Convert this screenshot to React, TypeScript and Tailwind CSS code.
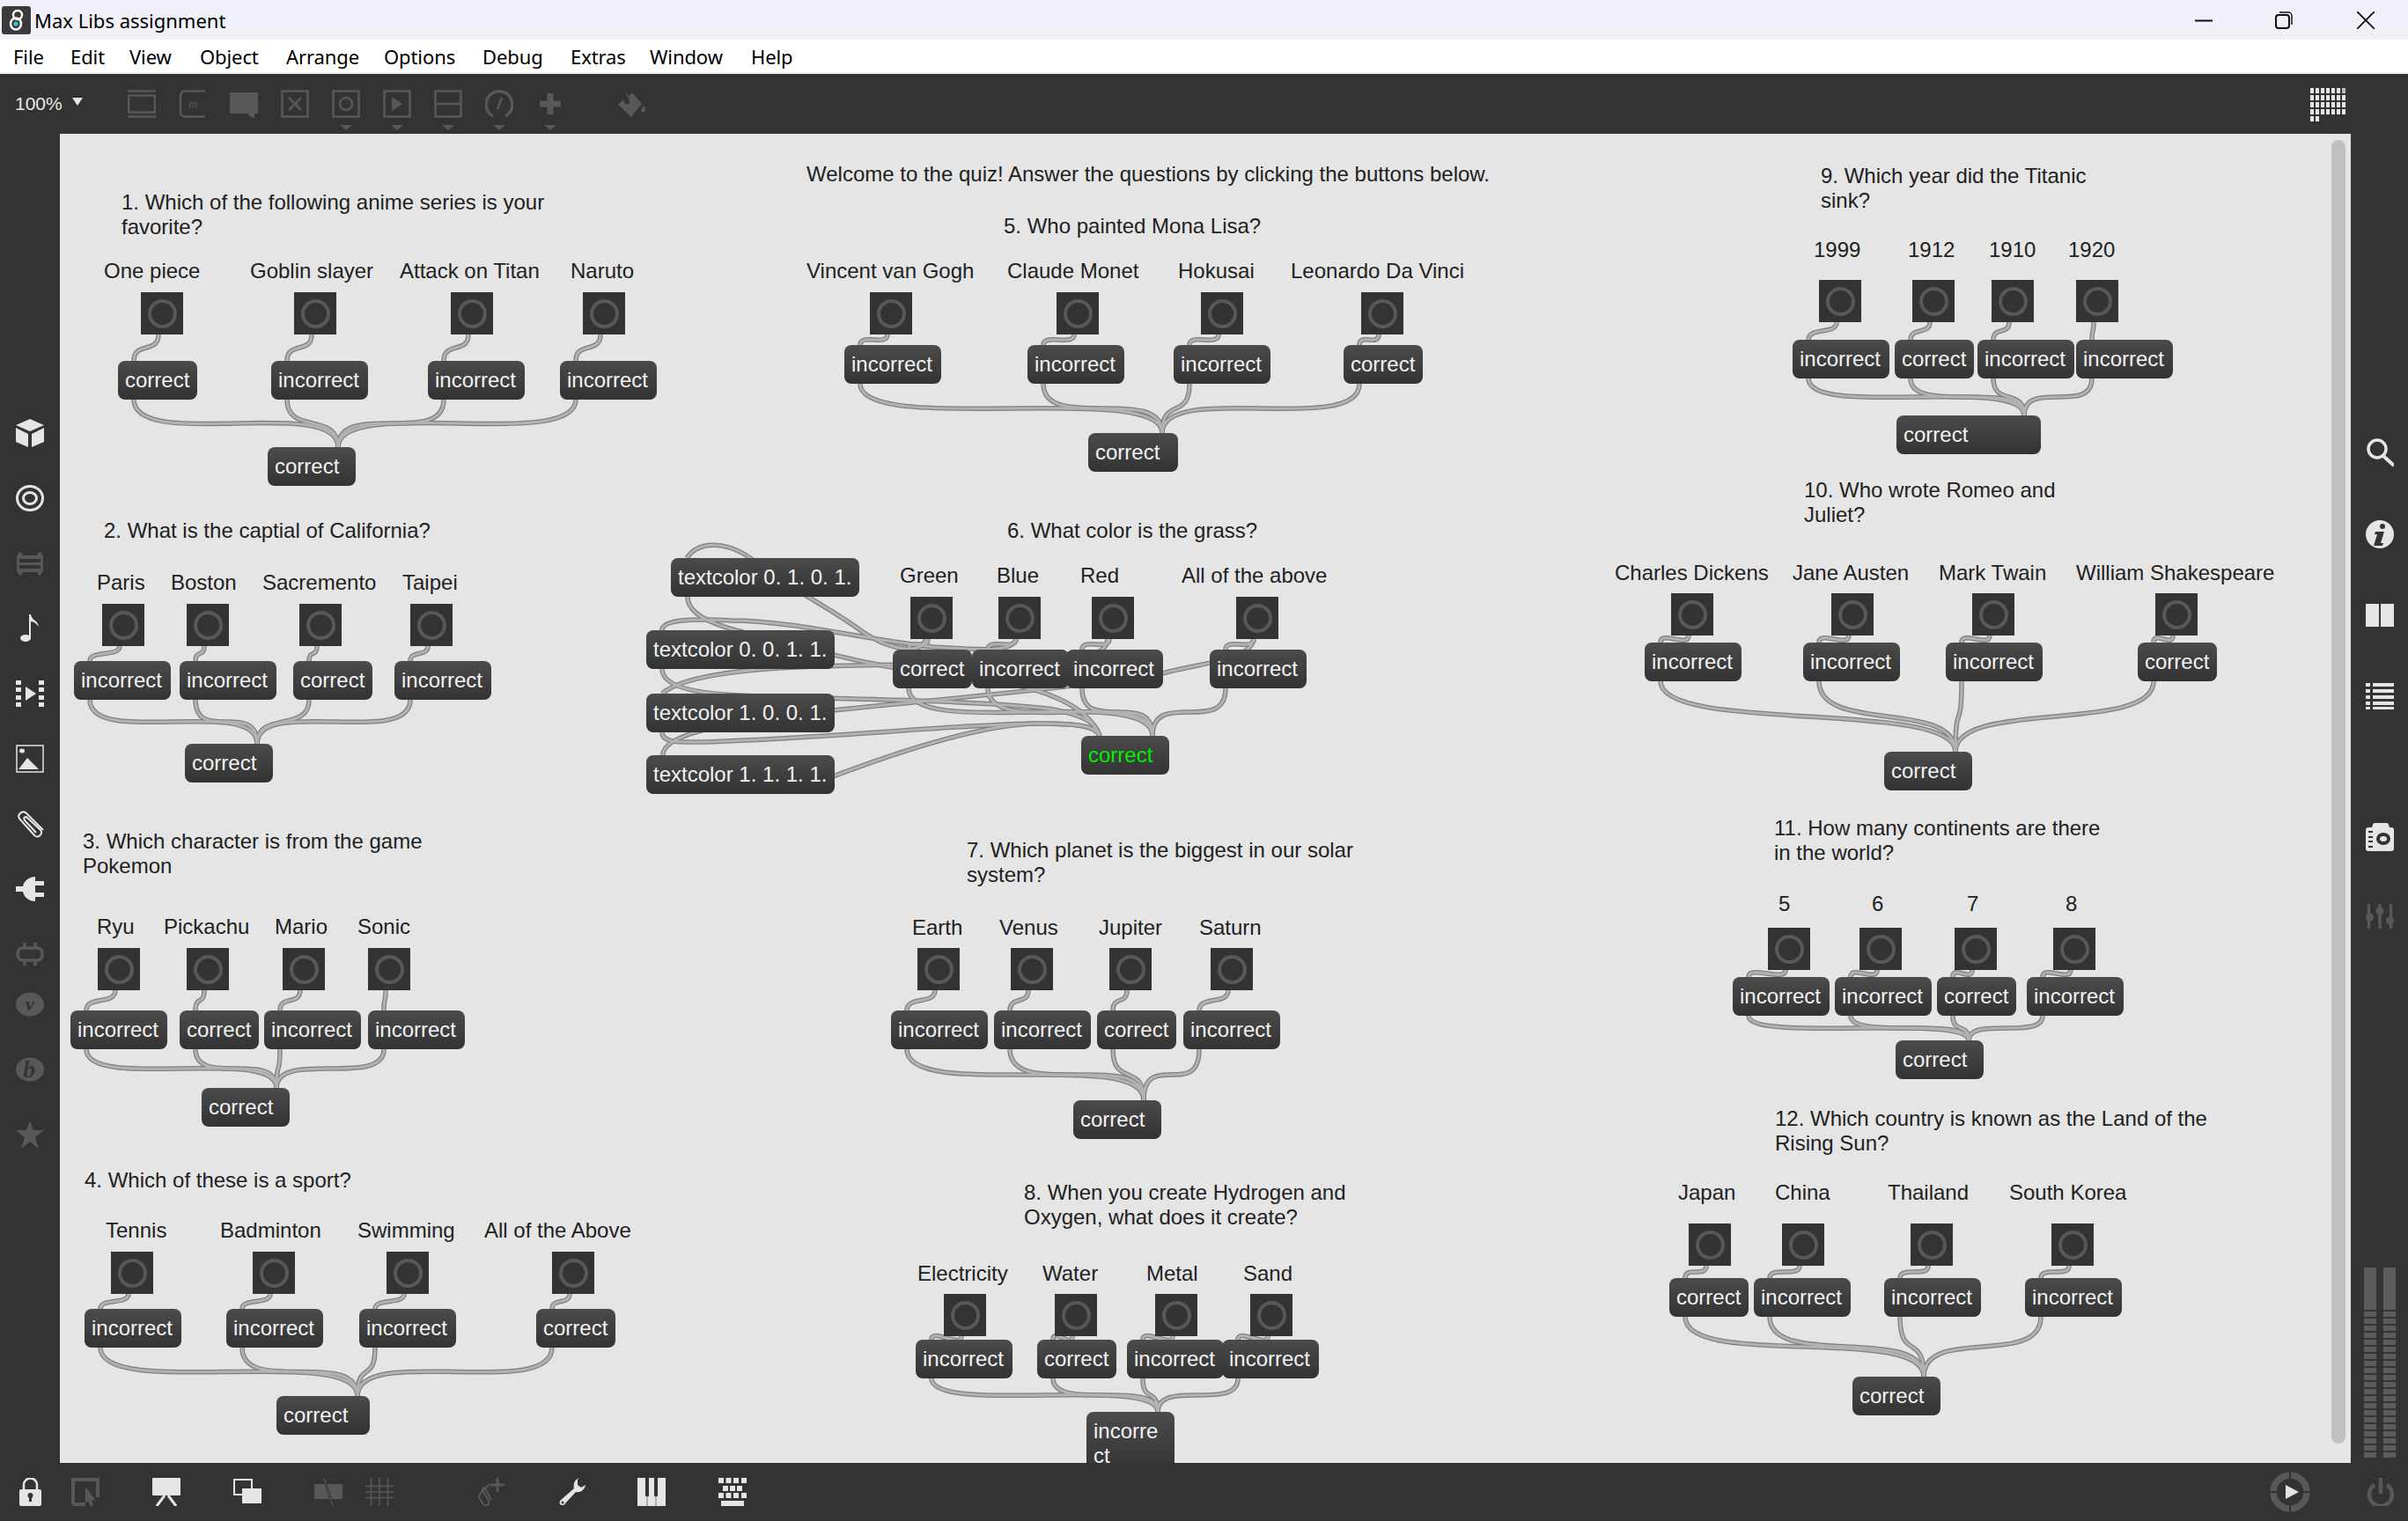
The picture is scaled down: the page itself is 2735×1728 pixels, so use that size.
import React from "react";

const DIM = "#585858";
const LT = "#e5e5e5";
const CX = 68;
const CY = 152;

type Q = {
  text: [number, number, string];
  ly: number;
  labels: [number, string][];
  ty: number;
  toggles: number[];
  my: number;
  msgs: [number, string][];
  target: { x: number; y: number; w: number; inlet: number; text?: string; green?: boolean; h?: number };
};

const quiz: Q[] = [
  { text: [138, 229, "1. Which of the following anime series is your\nfavorite?"], ly: 307, labels: [[118, "One piece"], [284, "Goblin slayer"], [454, "Attack on Titan"], [648, "Naruto"]], ty: 332, toggles: [160, 334, 512, 662], my: 410, msgs: [[134, "correct"], [308, "incorrect"], [486, "incorrect"], [636, "incorrect"]], target: { x: 304, y: 508, w: 100, inlet: 384 } },
  { text: [118, 602, "2. What is the captial of California?"], ly: 661, labels: [[110, "Paris"], [194, "Boston"], [298, "Sacremento"], [457, "Taipei"]], ty: 686, toggles: [116, 212, 340, 466], my: 751, msgs: [[84, "incorrect"], [204, "incorrect"], [333, "correct"], [448, "incorrect"]], target: { x: 210, y: 845, w: 100, inlet: 292 } },
  { text: [94, 955, "3. Which character is from the game\nPokemon"], ly: 1052, labels: [[110, "Ryu"], [186, "Pickachu"], [312, "Mario"], [406, "Sonic"]], ty: 1077, toggles: [111, 212, 321, 418], my: 1148, msgs: [[80, "incorrect"], [204, "correct"], [300, "incorrect"], [418, "incorrect"]], target: { x: 229, y: 1236, w: 100, inlet: 314 } },
  { text: [96, 1340, "4. Which of these is a sport?"], ly: 1397, labels: [[120, "Tennis"], [250, "Badminton"], [406, "Swimming"], [550, "All of the Above"]], ty: 1422, toggles: [126, 287, 439, 627], my: 1487, msgs: [[96, "incorrect"], [257, "incorrect"], [408, "incorrect"], [609, "correct"]], target: { x: 314, y: 1586, w: 106, inlet: 406 } },
  { text: [1140, 256, "5. Who painted Mona Lisa?"], ly: 307, labels: [[916, "Vincent van Gogh"], [1144, "Claude Monet"], [1338, "Hokusai"], [1466, "Leonardo Da Vinci"]], ty: 332, toggles: [988, 1200, 1364, 1546], my: 392, msgs: [[959, "incorrect"], [1167, "incorrect"], [1333, "incorrect"], [1526, "correct"]], target: { x: 1236, y: 492, w: 102, inlet: 1320 } },
  { text: [1144, 602, "6. What color is the grass?"], ly: 653, labels: [[1022, "Green"], [1132, "Blue"], [1227, "Red"], [1342, "All of the above"]], ty: 678, toggles: [1034, 1134, 1240, 1404], my: 738, msgs: [[1014, "correct"], [1104, "incorrect"], [1211, "incorrect"], [1374, "incorrect"]], target: { x: 1228, y: 836, w: 100, inlet: 1309, green: true } },
  { text: [1098, 965, "7. Which planet is the biggest in our solar\nsystem?"], ly: 1053, labels: [[1036, "Earth"], [1135, "Venus"], [1248, "Jupiter"], [1362, "Saturn"]], ty: 1077, toggles: [1042, 1148, 1260, 1375], my: 1148, msgs: [[1012, "incorrect"], [1129, "incorrect"], [1246, "correct"], [1344, "incorrect"]], target: { x: 1219, y: 1250, w: 100, inlet: 1299 } },
  { text: [1163, 1354, "8. When you create Hydrogen and\nOxygen, what does it create?"], ly: 1446, labels: [[1042, "Electricity"], [1184, "Water"], [1302, "Metal"], [1412, "Sand"]], ty: 1470, toggles: [1072, 1198, 1312, 1420], my: 1522, msgs: [[1040, "incorrect"], [1178, "correct"], [1280, "incorrect"], [1388, "incorrect"]], target: { x: 1234, y: 1604, w: 100, inlet: 1315, text: "incorre\nct", h: 72 } },
  { text: [2068, 199, "9. Which year did the Titanic\nsink?"], ly: 283, labels: [[2060, "1999"], [2167, "1912"], [2259, "1910"], [2349, "1920"]], ty: 318, toggles: [2066, 2172, 2262, 2358], my: 386, msgs: [[2036, "incorrect"], [2152, "correct"], [2246, "incorrect"], [2358, "incorrect"]], target: { x: 2154, y: 472, w: 164, inlet: 2299 } },
  { text: [2049, 556, "10. Who wrote Romeo and\nJuliet?"], ly: 650, labels: [[1834, "Charles Dickens"], [2036, "Jane Austen"], [2202, "Mark Twain"], [2358, "William Shakespeare"]], ty: 674, toggles: [1898, 2080, 2240, 2448], my: 730, msgs: [[1868, "incorrect"], [2048, "incorrect"], [2210, "incorrect"], [2428, "correct"]], target: { x: 2140, y: 854, w: 100, inlet: 2221 } },
  { text: [2015, 940, "11. How many continents are there\nin the world?"], ly: 1026, labels: [[2020, "5"], [2126, "6"], [2234, "7"], [2346, "8"]], ty: 1054, toggles: [2008, 2112, 2220, 2332], my: 1110, msgs: [[1968, "incorrect"], [2084, "incorrect"], [2200, "correct"], [2302, "incorrect"]], target: { x: 2153, y: 1182, w: 100, inlet: 2236 } },
  { text: [2016, 1270, "12. Which country is known as the Land of the\nRising Sun?"], ly: 1354, labels: [[1906, "Japan"], [2016, "China"], [2144, "Thailand"], [2282, "South Korea"]], ty: 1390, toggles: [1918, 2024, 2170, 2330], my: 1452, msgs: [[1896, "correct"], [1992, "incorrect"], [2140, "incorrect"], [2300, "incorrect"]], target: { x: 2104, y: 1564, w: 100, inlet: 2185 } },
];

const textcolors: [number, number, string][] = [
  [762, 634, "textcolor 0. 1. 0. 1."],
  [734, 716, "textcolor 0. 0. 1. 1."],
  [734, 788, "textcolor 1. 0. 0. 1."],
  [734, 858, "textcolor 1. 1. 1. 1."],
];

const extraCords = [
  "M1052 726 C1045 745 1010 738 980 718 C950 695 900 670 860 640 C830 615 795 612 780 634",
  "M781 678 C781 700 815 712 860 722 C950 745 1000 760 1100 770 C1180 778 1235 800 1249 836",
  "M1154 726 C1150 742 1110 738 1060 735 C990 728 900 705 830 705 C780 702 752 705 752 716",
  "M752 760 C752 780 790 788 840 790 C960 795 1100 795 1190 805 C1230 812 1245 820 1249 836",
  "M1258 726 C1258 760 1150 750 1050 755 C950 756 790 755 752 788",
  "M752 832 C752 845 775 843 800 843 C950 838 1100 822 1180 822 C1225 822 1245 825 1249 836",
  "M1424 726 C1420 750 1370 752 1320 765 C1200 785 1000 800 900 812 C820 822 752 835 753 858",
  "M900 900 C1000 860 1110 822 1180 822 C1225 822 1245 825 1249 836",
];

function cordPath(x1: number, y1: number, x2: number, y2: number) {
  const dy = y2 - y1;
  const dx = Math.abs(x2 - x1);
  const d = dy < 15 ? 14 : dx > 150 ? Math.min(dy * 1.1, 60) : dx > 60 ? Math.min(dy, 58) : dy * 0.75;
  return `M${x1} ${y1} C${x1} ${y1 + d} ${x2} ${y2 - d} ${x2} ${y2}`;
}

const msgW = (t: string) => (t === "correct" ? 90 : 110);

function allCords() {
  const out: string[] = [...extraCords];
  quiz.forEach((q) => {
    q.msgs.forEach(([mx, t], i) => {
      const tx = q.toggles[i];
      out.push(cordPath(tx + 20, q.ty + 48, mx + 18, q.my));
      out.push(cordPath(mx + 18, q.my + 44, q.target.inlet, q.target.y));
    });
  });
  return out;
}

function Message({ x, y, w, h = 44, text, green, wrap }: { x: number; y: number; w: number; h?: number; text: string; green?: boolean; wrap?: boolean }) {
  return (
    <div
      className={`absolute rounded-[8px] bg-gradient-to-b from-[#4b4b4b] to-[#333333] pl-[8px] text-[24px] leading-[28px] whitespace-pre ${green ? "text-[#00f000]" : "text-[#f2f2f2]"} ${wrap ? "pt-[8px]" : "flex items-center"}`}
      style={{ left: x - CX, top: y - CY, width: w, height: h }}
    >
      {text}
    </div>
  );
}

function Toggle({ x, y }: { x: number; y: number }) {
  return (
    <div className="absolute flex h-[48px] w-[48px] items-center justify-center bg-[#333333]" style={{ left: x - CX, top: y - CY }}>
      <div className="h-[33px] w-[33px] rounded-full border-[4px] border-[#585858]" />
    </div>
  );
}

function Label({ x, y, text }: { x: number; y: number; text: string }) {
  return (
    <div className="absolute whitespace-pre text-[24px] leading-[28px] text-[#212121]" style={{ left: x - CX, top: y - CY - 13 }}>
      {text}
    </div>
  );
}

function Ico({ children, w = 32, h = 32, vb = "0 0 32 32" }: { children: React.ReactNode; w?: number; h?: number; vb?: string }) {
  return (
    <svg width={w} height={h} viewBox={vb} className="block shrink-0">
      {children}
    </svg>
  );
}

const Caret = ({ show }: { show: boolean }) =>
  show ? (
    <svg width="14" height="6" viewBox="0 0 14 6" className="absolute top-[58px] left-[22px]">
      <path d="M0 0h14L7 6z" fill={DIM} />
    </svg>
  ) : null;

function ToolSlot({ children, caret = false }: { children: React.ReactNode; caret?: boolean }) {
  return (
    <div className="relative flex h-[68px] w-[58px] items-start justify-center pt-[18px]">
      {children}
      <Caret show={caret} />
    </div>
  );
}

function TopToolbar() {
  const s = { fill: "none", stroke: DIM, strokeWidth: 2.5 };
  return (
    <div className="flex h-[68px] items-start bg-[#333333]">
      <div className="flex h-[68px] w-[132px] items-center pl-[17px] text-[21px] text-[#e8e8e8]">
        <span>100%</span>
        <svg width="12" height="9" viewBox="0 0 12 9" className="mb-[6px] ml-[11px]">
          <path d="M0 0h12L6 9z" fill={LT} />
        </svg>
      </div>
      <ToolSlot>
        <Ico>
          <path d="M0 1.5h32M0 6.5h32M0 25.5h32M0 30.5h32M1 6v20M31 6v20" {...s} />
        </Ico>
      </ToolSlot>
      <ToolSlot>
        <Ico>
          <path d="M30 1.5H7a5 5 0 0 0-5 5v19a5 5 0 0 0 5 5h23" {...s} />
          <text x="11" y="21" fontFamily="Liberation Serif" fontStyle="italic" fontSize="15" fill={DIM}>m</text>
        </Ico>
      </ToolSlot>
      <ToolSlot>
        <Ico>
          <path d="M0 3h32v24h-4v6l-9-6H0z" fill={DIM} />
        </Ico>
      </ToolSlot>
      <ToolSlot>
        <Ico>
          <rect x="1.5" y="1.5" width="29" height="29" {...s} />
          <path d="M9 9l14 14M23 9L9 23" {...s} />
        </Ico>
      </ToolSlot>
      <ToolSlot caret>
        <Ico>
          <rect x="1.5" y="1.5" width="29" height="29" {...s} />
          <circle cx="16" cy="16" r="7" {...s} />
        </Ico>
      </ToolSlot>
      <ToolSlot caret>
        <Ico>
          <rect x="1.5" y="1.5" width="29" height="29" {...s} />
          <path d="M10 8l12 8-12 8z" fill={DIM} />
        </Ico>
      </ToolSlot>
      <ToolSlot caret>
        <Ico>
          <rect x="1.5" y="1.5" width="29" height="29" {...s} />
          <path d="M2 16h28" {...s} />
        </Ico>
      </ToolSlot>
      <ToolSlot caret>
        <Ico>
          <path d="M9 30A15 15 0 1 1 23 30" fill="none" stroke={DIM} strokeWidth="3.5" />
          <path d="M14 22L19 9" stroke={DIM} strokeWidth="2.5" />
        </Ico>
      </ToolSlot>
      <ToolSlot caret>
        <Ico>
          <path d="M16 4v24M4 16h24" fill="none" stroke={DIM} strokeWidth="7" />
        </Ico>
      </ToolSlot>
      <div className="ml-[48px] pt-[18px]">
        <Ico>
          <path d="M9 0l3 8-2 1z" fill={DIM} />
          <path d="M16 3l11 13-12 15L0 17l6-6 2 5h5L12 8z" fill={DIM} />
          <path d="M29 17c2 4 3 6 1 8s-5 0-4-2 2-3 3-6z" fill={DIM} />
        </Ico>
      </div>
      <div className="ml-auto mr-[71px] mt-[16px] grid grid-cols-[repeat(7,4.5px)] gap-x-[1.5px] gap-y-[2px]">
        {Array.from({ length: 30 }).map((_, i) => (
          <div key={i} className={`h-[6px] w-[4.5px] ${i === 6 ? "bg-[#bdbdbd]" : "bg-[#e6e6e6]"}`} />
        ))}
      </div>
    </div>
  );
}

function LeftBar() {
  return (
    <div className="flex w-[68px] shrink-0 flex-col items-center bg-[#333333] pt-[303px]">
      {[
        <Ico key="cube">
          <path d="M16 0l16 7-16 7L0 7z M0 10l14 7v15L0 26z M32 10l-14 7v15l14-6z" fill={LT} />
        </Ico>,
        <Ico key="target">
          <ellipse cx="16" cy="16" rx="14.5" ry="13.5" fill="none" stroke={LT} strokeWidth="3" />
          <ellipse cx="16" cy="16" rx="7.5" ry="6.5" fill="none" stroke={LT} strokeWidth="3" />
        </Ico>,
        <Ico key="rack">
          <rect x="1" y="7" width="30" height="19" fill={DIM} />
          <rect x="4" y="11" width="24" height="4" fill="#333333" />
          <rect x="4" y="18" width="24" height="4" fill="#333333" />
          <circle cx="5" cy="6" r="2.5" fill={DIM} />
          <circle cx="27" cy="6" r="2.5" fill={DIM} />
          <circle cx="27" cy="27" r="2.5" fill={DIM} />
          <circle cx="5" cy="27" r="2.5" fill={DIM} />
        </Ico>,
        <Ico key="note">
          <ellipse cx="11" cy="27" rx="6" ry="4" fill={LT} />
          <path d="M15 27V0h2c1 7 8 6 9 14-3-4-6-6-9-6v19z" fill={LT} />
        </Ico>,
        <Ico key="film">
          <path d="M0 1h6v5H0zM0 9h6v5H0zM0 18h6v5H0zM0 26h6v5H0zM26 1h6v5h-6zM26 9h6v5h-6zM26 18h6v5h-6zM26 26h6v5h-6zM11 8l12 8-12 8z" fill={LT} />
        </Ico>,
        <Ico key="img">
          <rect x="1" y="1" width="30" height="30" fill="none" stroke={LT} strokeWidth="1.5" />
          <ellipse cx="7" cy="7" rx="3" ry="2.5" fill={LT} />
          <path d="M3 28l10-13 13 13z" fill={LT} />
        </Ico>,
        <Ico key="clip">
          <path d="M31 23 12 4C8 0 1 5 4 10l17 19c3 4 11-1 7-6L13 9c-2-2-5 0-3 3l13 14" fill="none" stroke={LT} strokeWidth="2" />
        </Ico>,
        <Ico key="plug">
          <path d="M0 13h8c1-6 7-11 14-11v28C15 30 9 25 8 19H0zM22 7h10v5H22zM22 20h10v5H22z" fill={LT} />
        </Ico>,
        <Ico key="rack2">
          <rect x="2" y="9" width="28" height="14" rx="6" fill="none" stroke={DIM} strokeWidth="3.5" />
          <path d="M10 3v6M22 3v6M10 23v6M22 23v6" stroke={DIM} strokeWidth="3.5" />
        </Ico>,
      ].map((n, i) => (
        <div key={i} className="flex h-[74px] items-center justify-center">
          {n}
        </div>
      ))}
      <div className="mt-[-17px] flex h-[74px] items-center justify-center">
        <Ico>
          <ellipse cx="16" cy="16" rx="16" ry="13.5" fill={DIM} />
          <text x="16" y="23" textAnchor="middle" fontFamily="Liberation Serif" fontStyle="italic" fontWeight="700" fontSize="22" fill="#333333">v</text>
        </Ico>
      </div>
      <div className="flex h-[74px] items-center justify-center">
        <Ico>
          <ellipse cx="16" cy="16" rx="16" ry="13.5" fill={DIM} />
          <text x="15" y="25" textAnchor="middle" fontFamily="Liberation Serif" fontStyle="italic" fontWeight="700" fontSize="28" fill="#333333">b</text>
        </Ico>
      </div>
      <div className="flex h-[74px] items-center justify-center">
        <Ico>
          <path d="M16 0l4 11h12l-10 8 4 13-10-8-10 8 4-13L0 11h12z" fill={DIM} />
        </Ico>
      </div>
    </div>
  );
}

function RightBar() {
  return (
    <div className="flex w-[65px] shrink-0 flex-col items-center bg-[#333333] pt-[346px]">
      <div className="flex h-[32px] items-center">
        <Ico>
          <circle cx="13" cy="12" r="10" fill="none" stroke={LT} strokeWidth="3.5" />
          <path d="M20 20l11 10" stroke={LT} strokeWidth="4" strokeLinecap="round" />
        </Ico>
      </div>
      <div className="mt-[61px] h-[32px]">
        <Ico>
          <circle cx="16" cy="16" r="16" fill={LT} />
          <circle cx="19" cy="7" r="3" fill="#333333" />
          <path d="M11 13h10l-4 13h3l-1 3H9l4-13h-3z" fill="#333333" />
        </Ico>
      </div>
      <div className="mt-[60px] h-[32px]">
        <Ico>
          <rect x="0" y="3" width="15" height="26" fill={LT} />
          <rect x="17" y="3" width="15" height="26" fill={LT} />
        </Ico>
      </div>
      <div className="mt-[60px] h-[32px]">
        <Ico>
          <path d="M0 1h5v4H0zM8 1h24v4H8zM0 8h5v4H0zM8 8h24v4H8zM0 15h5v4H0zM8 15h24v4H8zM0 22h5v4H0zM8 22h24v4H8zM0 28h5v3H0zM8 28h24v3H8z" fill={LT} />
        </Ico>
      </div>
      <div className="mt-[128px] h-[32px]">
        <Ico>
          <path d="M0 8a3 3 0 0 1 3-3h4l1-3c0-1 1-2 2-2h14c1 0 2 1 2 2l1 3h2a3 3 0 0 1 3 3v21a3 3 0 0 1-3 3H3a3 3 0 0 1-3-3z" fill={LT} />
          <ellipse cx="20" cy="18" rx="8" ry="7" fill="#333333" />
          <ellipse cx="20" cy="18" rx="4" ry="3" fill={LT} />
          <path d="M3 9h5v2H3zM3 15h5v2H3zM3 20h5v2H3zM3 26h5v2H3z" fill="#333333" />
        </Ico>
      </div>
      <div className="mt-[60px] h-[32px]">
        <Ico>
          <path d="M3.5 0v28M16 0v28M28.500 0v28" stroke={DIM} strokeWidth="3.5" />
          <circle cx="4.500" cy="15" r="4.500" fill={DIM} />
          <circle cx="16" cy="8" r="4.500" fill={DIM} />
          <circle cx="27.500" cy="19" r="4.500" fill={DIM} />
        </Ico>
      </div>
      <div className="mt-auto mb-[6px] flex gap-[8px]">
        {[0, 1].map((c) => (
          <div key={c} className="flex w-[14px] flex-col gap-[2px]">
            <div className="h-[48px] bg-[#5c5c5c]" />
            {Array.from({ length: 21 }).map((_, i) => (
              <div key={i} className="h-[6px] bg-[#5c5c5c]" />
            ))}
          </div>
        ))}
      </div>
    </div>
  );
}

function BottomBar() {
  return (
    <div className="flex h-[66px] shrink-0 items-center bg-[#333333]">
      <div className="ml-[22px]">
        <Ico w={25} vb="0 0 25 32">
          <path d="M5 14V8a7.500 7.500 0 0 1 15 0v6" fill="none" stroke={LT} strokeWidth="2.5" />
          <rect x="0" y="13" width="25" height="19" rx="2" fill={LT} />
          <circle cx="12.500" cy="20" r="3" fill="#333333" />
          <rect x="11" y="21" width="3" height="6" fill="#333333" />
        </Ico>
      </div>
      <div className="ml-[34px]">
        <Ico>
          <path d="M2 30V2h28v20" fill="none" stroke={DIM} strokeWidth="4" />
          <path d="M2 30h14" stroke={DIM} strokeWidth="4" />
          <path d="M16 10l12 16-5-1 2 7-3 1-3-7-3 3z" fill={DIM} />
        </Ico>
      </div>
      <div className="ml-[60px]">
        <Ico>
          <rect x="0" y="0" width="32" height="20" rx="1" fill={LT} />
          <path d="M14 20L5 32M18 20l9 12" stroke={LT} strokeWidth="3" />
        </Ico>
      </div>
      <div className="ml-[60px]">
        <Ico>
          <rect x="1" y="2" width="20" height="17" fill="#333333" stroke={LT} strokeWidth="2" />
          <rect x="10" y="12" width="22" height="17" fill={LT} />
        </Ico>
      </div>
      <div className="ml-[60px]">
        <Ico>
          <rect x="0" y="7" width="32" height="17" fill={DIM} />
          <path d="M11 0l10 32" stroke="#333333" strokeWidth="3" />
          <path d="M11 0l10 32" stroke={DIM} strokeWidth="1.2" />
        </Ico>
      </div>
      <div className="ml-[26px]">
        <Ico>
          <path d="M6.500 0v32M16 0v32M25.500 0v32M0 9.500h32M0 16h32M0 22.500h32" stroke={DIM} strokeWidth="1.600" />
        </Ico>
      </div>
      <div className="ml-[94px]">
        <Ico>
          <path d="M15 7L5 17c-4 5 0 8 3 13 2 3 8 1 6-4L7 14c-1-2 1-4 3-2l7 13" fill="none" stroke={DIM} strokeWidth="2" />
          <path d="M24 0v16M16 8h16" stroke={DIM} strokeWidth="3" />
        </Ico>
      </div>
      <div className="ml-[61px]">
        <Ico>
          <path d="M24 0C18 2 17 8 18 12L2 26c-1 2 0 5 2 5s3 0 4-2l12-13c5 1 10-2 11-8l-5 3-4-3 0-6z" fill={LT} />
          <circle cx="5" cy="28" r="1.500" fill="#333333" />
        </Ico>
      </div>
      <div className="ml-[58px]">
        <Ico>
          <rect x="0" y="0" width="32" height="32" fill={LT} />
          <rect x="9" y="0" width="4" height="21" fill="#333333" />
          <rect x="19" y="0" width="4" height="21" fill="#333333" />
          <path d="M11 21v11M21 21v11" stroke="#777" strokeWidth="1" />
        </Ico>
      </div>
      <div className="ml-[60px]">
        <Ico>
          <path d="M0 0h6v6H0zM8.500 0h6v6h-6zM17 0h6v6h-6zM26 0h6v6h-6zM5 9h6v6H5zM13 9h6v6h-6zM21 9h6v6h-6zM0 17h6v6H0zM8.500 17h6v6h-6zM17 17h6v6h-6zM26 17h6v6h-6zM3 26h26v6H3z" fill={LT} />
        </Ico>
      </div>
      <div className="ml-auto mr-[64px]">
        <Ico w={46} h={46} vb="0 0 46 46">
          <circle cx="23" cy="23" r="19" fill="none" stroke={DIM} strokeWidth="7.500" />
          <path d="M23 0v46M0 23h46" stroke="#333333" strokeWidth="2" />
          <path d="M18 15l15 8-15 8z" fill={LT} />
        </Ico>
      </div>
      <div className="mr-[15px]">
        <Ico>
          <path d="M9 8a13 13 0 1 0 14 0" fill="none" stroke={DIM} strokeWidth="4.500" />
          <path d="M16 1v15" stroke={DIM} strokeWidth="4.500" strokeLinecap="round" />
        </Ico>
      </div>
    </div>
  );
}

const menu: [string, string][] = [
  ["File", "w-[65px]"],
  ["Edit", "w-[67px]"],
  ["View", "w-[80px]"],
  ["Object", "w-[98px]"],
  ["Arrange", "w-[111px]"],
  ["Options", "w-[112px]"],
  ["Debug", "w-[100px]"],
  ["Extras", "w-[90px]"],
  ["Window", "w-[115px]"],
  ["Help", "w-[70px]"],
];

export default function App() {
  const cords = allCords();
  return (
    <div className="flex h-[1728px] w-[2735px] flex-col overflow-hidden bg-[#333333] font-['Liberation_Sans',sans-serif]">
      <div className="flex h-[45px] shrink-0 items-center bg-[#f0f1f8] pl-[2px] text-black">
        <svg width="33" height="32" viewBox="0 0 33 32" className="block">
          <rect width="33" height="32" rx="3" fill="#3a3a3a" />
          <ellipse cx="18" cy="10" rx="5" ry="5" fill="none" stroke="#fff" strokeWidth="2.500" />
          <ellipse cx="16" cy="20" rx="6" ry="6.500" fill="none" stroke="#fff" strokeWidth="2.500" />
          <circle cx="16" cy="20" r="2.500" fill="#43c6d8" />
        </svg>
        <span className="ml-[4px] pt-[1px] font-['Noto_Sans',sans-serif] text-[22px]">Max Libs assignment</span>
        <div className="ml-auto flex items-center">
          <svg width="20" height="20" viewBox="0 0 20 20" className="mr-[71px]">
            <path d="M0 10.500h20" stroke="#111" strokeWidth="2" />
          </svg>
          <svg width="20" height="20" viewBox="0 0 20 20" className="mr-[73px]">
            <rect x="1" y="4" width="15" height="15" rx="3" fill="none" stroke="#111" strokeWidth="2" />
            <path d="M5 1h10a4 4 0 0 1 4 4v10" fill="none" stroke="#111" strokeWidth="1.500" />
          </svg>
          <svg width="20" height="20" viewBox="0 0 20 20" className="mr-[38px]">
            <path d="M0 0l20 20M20 0L0 20" stroke="#111" strokeWidth="1.800" />
          </svg>
        </div>
      </div>
      <div className="flex h-[37px] shrink-0 items-center bg-white pl-[15px] pt-[2px] font-['Noto_Sans',sans-serif] text-[22px] tracking-[-0.1px] text-black">
        {menu.map(([m, w]) => (
          <span key={m} className={w}>
            {m}
          </span>
        ))}
      </div>
      <div className="h-[2px] shrink-0 bg-[#efefef]" />
      <TopToolbar />
      <div className="flex min-h-0 flex-1">
        <LeftBar />
        <div className="relative flex-1 overflow-hidden bg-[#e5e5e5]">
          <svg className="absolute inset-0 block h-full w-full" viewBox={`${CX} ${CY} 2602 1510`}>
            {cords.map((d, i) => (
              <path key={`o${i}`} d={d} fill="none" stroke="#808080" strokeWidth="5.500" />
            ))}
            {cords.map((d, i) => (
              <path key={`i${i}`} d={d} fill="none" stroke="#b2b2b2" strokeWidth="3" />
            ))}
          </svg>
          <Label x={916} y={197} text="Welcome to the quiz! Answer the questions by clicking the buttons below." />
          {quiz.map((q, i) => (
            <React.Fragment key={i}>
              <Label x={q.text[0]} y={q.text[1]} text={q.text[2]} />
              {q.labels.map(([x, t]) => (
                <Label key={t} x={x} y={q.ly} text={t} />
              ))}
              {q.toggles.map((x) => (
                <Toggle key={x} x={x} y={q.ty} />
              ))}
              {q.msgs.map(([x, t], j) => (
                <Message key={j} x={x} y={q.my} w={msgW(t)} text={t} />
              ))}
              <Message x={q.target.x} y={q.target.y} w={q.target.w} h={q.target.h ?? 44} text={q.target.text ?? "correct"} green={q.target.green} wrap={!!q.target.text} />
            </React.Fragment>
          ))}
          {textcolors.map(([x, y, t]) => (
            <Message key={t} x={x} y={y} w={214} text={t} />
          ))}
          <div className="absolute top-[7px] bottom-[22px] left-[2580px] w-[16px] rounded-full bg-[#c0c0c0]" />
        </div>
        <RightBar />
      </div>
      <BottomBar />
    </div>
  );
}
